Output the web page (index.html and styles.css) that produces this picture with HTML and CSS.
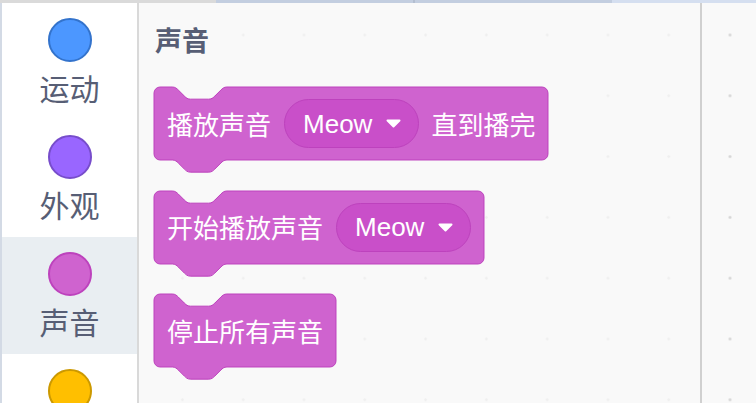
FILE: index.html
```html
<!DOCTYPE html>
<html lang="zh">
<head>
<meta charset="UTF-8">
<title>Scratch 声音</title>
<link rel="stylesheet" href="styles.css">
</head>
<body>

<div class="app">

<!-- tab bottoms -->
<div class="tabs">
<div class="tab-edge first"></div>
<div class="tab-edge mid"></div>
<div class="tab-edge mid last"></div>
<div class="tab-edge rest"></div>
</div>

<div class="main">

<!-- Categories -->
<div class="categories">
<div class="category">
<div class="bubble motion"></div>
<div class="cat-label">运动</div>
</div>
<div class="category">
<div class="bubble looks"></div>
<div class="cat-label">外观</div>
</div>
<div class="category selected">
<div class="bubble sound"></div>
<div class="cat-label">声音</div>
</div>
<div class="category">
<div class="bubble events"></div>
</div>
</div>

<!-- Block palette -->
<div class="palette">
<div class="palette-title">声音</div>

<div class="block-list">
<div class="block">
<span class="block-text">播放声音</span>
<span class="dropdown"><span class="dd-text">Meow</span><svg class="dd-arrow" width="15" height="9" viewBox="0 0 15 9"><path d="M1.5 1.5 H13.5 L7.5 7.5 Z" fill="#fff" stroke="#fff" stroke-width="2" stroke-linejoin="round"/></svg></span>
<span class="block-text">直到播完</span>
</div>

<div class="block">
<span class="block-text">开始播放声音</span>
<span class="dropdown"><span class="dd-text">Meow</span><svg class="dd-arrow" width="15" height="9" viewBox="0 0 15 9"><path d="M1.5 1.5 H13.5 L7.5 7.5 Z" fill="#fff" stroke="#fff" stroke-width="2" stroke-linejoin="round"/></svg></span>
</div>

<div class="block">
<span class="block-text">停止所有声音</span>
</div>
</div>
</div>

<div class="workspace"></div>

</div>
</div>

<script>
// draw the stack block outline behind each block, sized to its content
const SCALE = 1.52;

function blockPath(w, h){
    return "M 0,4 A 4,4 0 0,1 4,0 H 12 c 2,0 3,1 4,2 l 4,4 c 1,1 2,2 4,2 h 12 c 2,0 3,-1 4,-2 l 4,-4 c 1,-1 2,-2 4,-2" +
        " H " + (w - 4) + " a 4,4 0 0,1 4,4 V " + (h - 4) + " a 4,4 0 0,1 -4,4" +
        " H 48 c -2,0 -3,1 -4,2 l -4,4 c -1,1 -2,2 -4,2 h -12 c -2,0 -3,-1 -4,-2 l -4,-4 c -1,-1 -2,-2 -4,-2" +
        " H 4 a 4,4 0 0,1 -4,-4 z";
}

document.querySelectorAll(".block").forEach(block=>{
    const W = block.offsetWidth;
    const H = block.offsetHeight;
    const w = W / SCALE;
    const h = H / SCALE;
    const svgNS = "http://www.w3.org/2000/svg";
    const svg = document.createElementNS(svgNS, "svg");
    svg.setAttribute("class", "block-shape");
    svg.setAttribute("width", W);
    svg.setAttribute("height", H + 8 * SCALE);
    svg.setAttribute("viewBox", "0 0 " + w + " " + (h + 8));
    const path = document.createElementNS(svgNS, "path");
    path.setAttribute("d", blockPath(w, h));
    path.setAttribute("fill", "#cf63cf");
    path.setAttribute("stroke", "#bd42bd");
    path.setAttribute("stroke-width", "1");
    path.setAttribute("vector-effect", "non-scaling-stroke");
    svg.appendChild(path);
    block.insertBefore(svg, block.firstChild);
});
</script>

</body>
</html>
```

FILE: styles.css
```css
body{
    margin:0;
    background:#f9f9f9;
    font-family:"Liberation Sans", "Noto Sans CJK SC", sans-serif;
}

.app{
    width:756px;
    height:403px;
    overflow:hidden;
    display:flex;
    flex-direction:column;
}

/* tab bottoms along the top */
.tabs{
    display:flex;
    height:3px;
    flex-shrink:0;
}

.tab-edge.first{
    width:216px;
    background:#dadada;
}

.tab-edge.mid{
    width:197px;
    background:#c3cee0;
}

.tab-edge.mid:not(.last){
    border-right:2px solid #b3bed0;
}

.tab-edge.rest{
    flex:1;
    background:#d5dff0;
}

.main{
    flex:1;
    display:flex;
    min-height:0;
}

/* categories column */
.categories{
    width:135px;
    flex-shrink:0;
    background:#fff;
    border-left:2px solid #d3dae5;
    border-right:2px solid #d9d9d9;
}

.category{
    height:117px;
    box-sizing:border-box;
    padding-top:15px;
    display:flex;
    flex-direction:column;
    align-items:center;
}

.category.selected{
    background:#e9eef2;
}

.bubble{
    width:44px;
    height:44px;
    box-sizing:border-box;
    border-radius:50%;
    border:2px solid;
}

.motion{ background:#4c97ff; border-color:#3373cc; }
.looks{ background:#9966ff; border-color:#774dcb; }
.sound{ background:#cf63cf; border-color:#bd42bd; }
.events{ background:#ffbf00; border-color:#cc9900; }

.cat-label{
    margin-top:8px;
    font-size:30px;
    line-height:34px;
    color:#575e75;
    font-family:"Noto Sans CJK SC", sans-serif;
}

/* palette */
.palette{
    width:563px;
    flex-shrink:0;
    border-right:2px solid #d0d0d0;
    padding:22px 0 0 15px;
    box-sizing:border-box;
    background-color:#f9f9f9;
    background-image:radial-gradient(circle, #efefef 1.1px, transparent 1.5px);
    background-size:60.8px 60.8px;
    background-position:13px 1.6px;
}

.palette-title{
    font-family:"Noto Sans CJK SC", sans-serif;
    font-weight:bold;
    font-size:27px;
    line-height:30px;
    color:#575e75;
    padding-left:1px;
}

.block-list{
    margin-top:32px;
    display:flex;
    flex-direction:column;
    align-items:flex-start;
    gap:30.5px;
}

.block{
    position:relative;
    height:73px;
    box-sizing:border-box;
    padding:0 13px;
    display:flex;
    align-items:center;
    gap:13px;
    color:#fff;
    font-size:26px;
}

.block-shape{
    position:absolute;
    left:0;
    top:0;
    overflow:visible;
}

.block-text,
.dropdown{
    position:relative;
    white-space:nowrap;
    line-height:26px;
}

.block-text{
    font-family:"Noto Sans CJK SC", sans-serif;
}

.dropdown{
    height:49px;
    box-sizing:border-box;
    border-radius:25px;
    background:#c94fc9;
    border:1px solid #bd42bd;
    padding:0 17px 0 18px;
    display:flex;
    align-items:center;
    gap:14px;
}

.dropdown + .block-text{
    margin-left:-1px;
}

.dd-text{
    font-family:"Liberation Sans", Arial, sans-serif;
    font-size:26px;
}

.dd-arrow{
    display:block;
}

/* code area on the right */
.workspace{
    flex:1;
    background-color:#f9f9f9;
    background-image:radial-gradient(circle, #d6d6d6 1.2px, transparent 1.6px);
    background-size:60.8px 60.8px;
    background-position:-2.4px 1.6px;
}
```
